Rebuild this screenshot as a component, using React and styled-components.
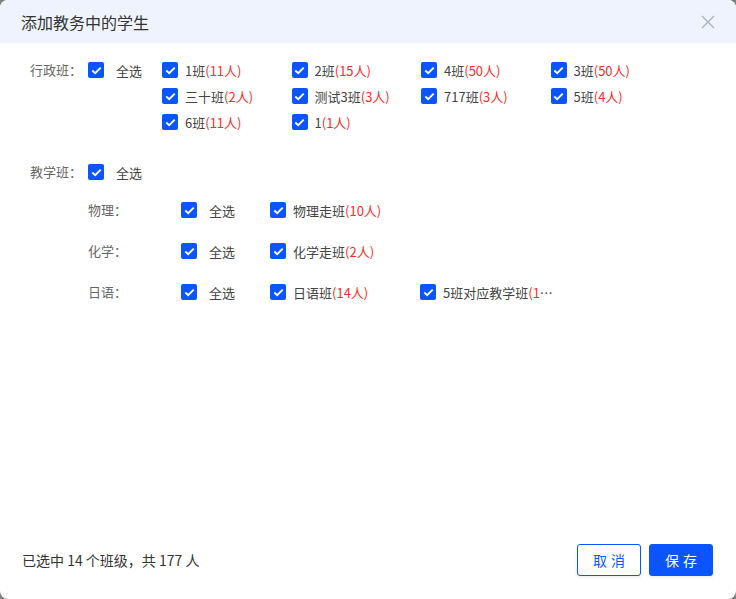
import React from "react";
import styled, { createGlobalStyle } from "styled-components";

const GlobalStyle = createGlobalStyle`
  html, body {
    margin: 0;
    padding: 0;
    background: #7f7f7f;
  }
  body {
    font-family: "Noto Sans CJK SC", "Noto Sans", sans-serif;
  }
`;

const Dialog = styled.div`
  width: 736px;
  height: 599px;
  background: #fff;
  border-radius: 8px;
  overflow: hidden;
  display: flex;
  flex-direction: column;
`;

const Header = styled.div`
  height: 43px;
  flex-shrink: 0;
  background: #eef3fe;
  display: flex;
  align-items: center;
  justify-content: space-between;
  padding: 0 20px 0 21px;
`;

const Title = styled.div`
  font-size: 16px;
  color: #333;
`;

const CloseButton = styled.button`
  border: none;
  background: none;
  padding: 0;
  width: 16px;
  height: 16px;
  display: flex;
  cursor: pointer;
`;

const Body = styled.div`
  flex: 1;
  padding: 14px 0 0 30px;
`;

const Section = styled.div`
  display: flex;
  align-items: flex-start;
  margin-bottom: ${(p) => p.gap || 0}px;
`;

const Label = styled.div`
  width: ${(p) => p.width}px;
  flex-shrink: 0;
  height: 26px;
  line-height: 26px;
  font-size: 13px;
  color: #666;
`;

const Grid = styled.div`
  display: grid;
  grid-template-columns: repeat(${(p) => p.cols}, ${(p) => p.colWidth}px);
  grid-auto-rows: 26px;
`;

const Item = styled.label`
  display: flex;
  align-items: center;
  width: ${(p) => p.width}px;
  height: 26px;
  flex-shrink: 0;
  font-size: 13px;
  color: #444;
  cursor: pointer;
`;

const Box = styled.span`
  width: 16px;
  height: 16px;
  border-radius: 2px;
  background: #0a55ff;
  display: flex;
  align-items: center;
  justify-content: center;
  flex-shrink: 0;
  margin-right: ${(p) => p.gap || 7}px;
`;

const Name = styled.span`
  white-space: nowrap;
  overflow: hidden;
  text-overflow: ellipsis;
  max-width: ${(p) => p.max || 200}px;
`;

const Count = styled.span`
  color: #ff2a2a;
`;

const Teaching = styled.div`
  padding-left: 58px;
  display: flex;
  flex-direction: column;
  gap: 15px;
  margin-top: 12px;
`;

const Footer = styled.div`
  height: 79px;
  flex-shrink: 0;
  display: flex;
  align-items: center;
  justify-content: space-between;
  padding: 0 23px 0 22px;
  box-sizing: border-box;
`;

const Summary = styled.div`
  font-size: 14px;
  color: #333;
`;

const Actions = styled.div`
  display: flex;
  gap: 8px;
`;

const Button = styled.button`
  width: 64px;
  height: 32px;
  border-radius: 3px;
  font-family: inherit;
  font-size: 14px;
  letter-spacing: 4px;
  text-indent: 4px;
  cursor: pointer;
  border: 1px solid #0a55ff;
  background: ${(p) => (p.primary ? "#0a55ff" : "#fff")};
  color: ${(p) => (p.primary ? "#fff" : "#0a55ff")};
  box-shadow: 0 2px 3px rgba(0, 0, 0, 0.06);
`;

const Check = ({ gap }) => (
  <Box gap={gap}>
    <svg width="11" height="9" viewBox="0 0 11 9">
      <path d="M1.3 4.5 L4.2 7.2 L9.7 1.6" fill="none" stroke="#fff" strokeWidth="1.9" />
    </svg>
  </Box>
);

const ClassItem = ({ name, count, width, max }) => (
  <Item width={width}>
    <Check />
    <Name max={max}>
      {name}
      {count !== undefined && <Count>({count}人)</Count>}
    </Name>
  </Item>
);

const adminClasses = [
  ["1班", 11],
  ["2班", 15],
  ["4班", 50],
  ["3班", 50],
  ["三十班", 2],
  ["测试3班", 3],
  ["717班", 3],
  ["5班", 4],
  ["6班", 11],
  ["1", 1],
];

const subjects = [
  { name: "物理：", classes: [["物理走班", 10]] },
  { name: "化学：", classes: [["化学走班", 2]] },
  {
    name: "日语：",
    classes: [
      ["日语班", 14],
      ["5班对应教学班", 1],
    ],
  },
];

export default function App() {
  return (
    <>
      <GlobalStyle />
      <Dialog>
        <Header>
          <Title>添加教务中的学生</Title>
          <CloseButton aria-label="关闭">
            <svg width="16" height="16" viewBox="0 0 16 16">
              <path d="M2 2 L14 14 M14 2 L2 14" stroke="#a9b1c6" strokeWidth="1.3" />
            </svg>
          </CloseButton>
        </Header>
        <Body>
          <Section gap={24}>
            <Label width={58}>行政班：</Label>
            <Item width={74}>
              <Check gap={12} />
              <Name>全选</Name>
            </Item>
            <Grid cols={4} colWidth={129.5}>
              {adminClasses.map(([n, c]) => (
                <ClassItem key={n + c} name={n} count={c} width={129.5} />
              ))}
            </Grid>
          </Section>
          <Section>
            <Label width={58}>教学班：</Label>
            <Item width={74}>
              <Check gap={12} />
              <Name>全选</Name>
            </Item>
          </Section>
          <Teaching>
            {subjects.map((s) => (
              <Section key={s.name}>
                <Label width={93}>{s.name}</Label>
                <Item width={89}>
                  <Check gap={12} />
                  <Name>全选</Name>
                </Item>
                {s.classes.map(([n, c]) => (
                  <ClassItem key={n} name={n} count={c} width={150} max={114} />
                ))}
              </Section>
            ))}
          </Teaching>
        </Body>
        <Footer>
          <Summary>已选中 14 个班级，共 177 人</Summary>
          <Actions>
            <Button>取消</Button>
            <Button primary>保存</Button>
          </Actions>
        </Footer>
      </Dialog>
    </>
  );
}
